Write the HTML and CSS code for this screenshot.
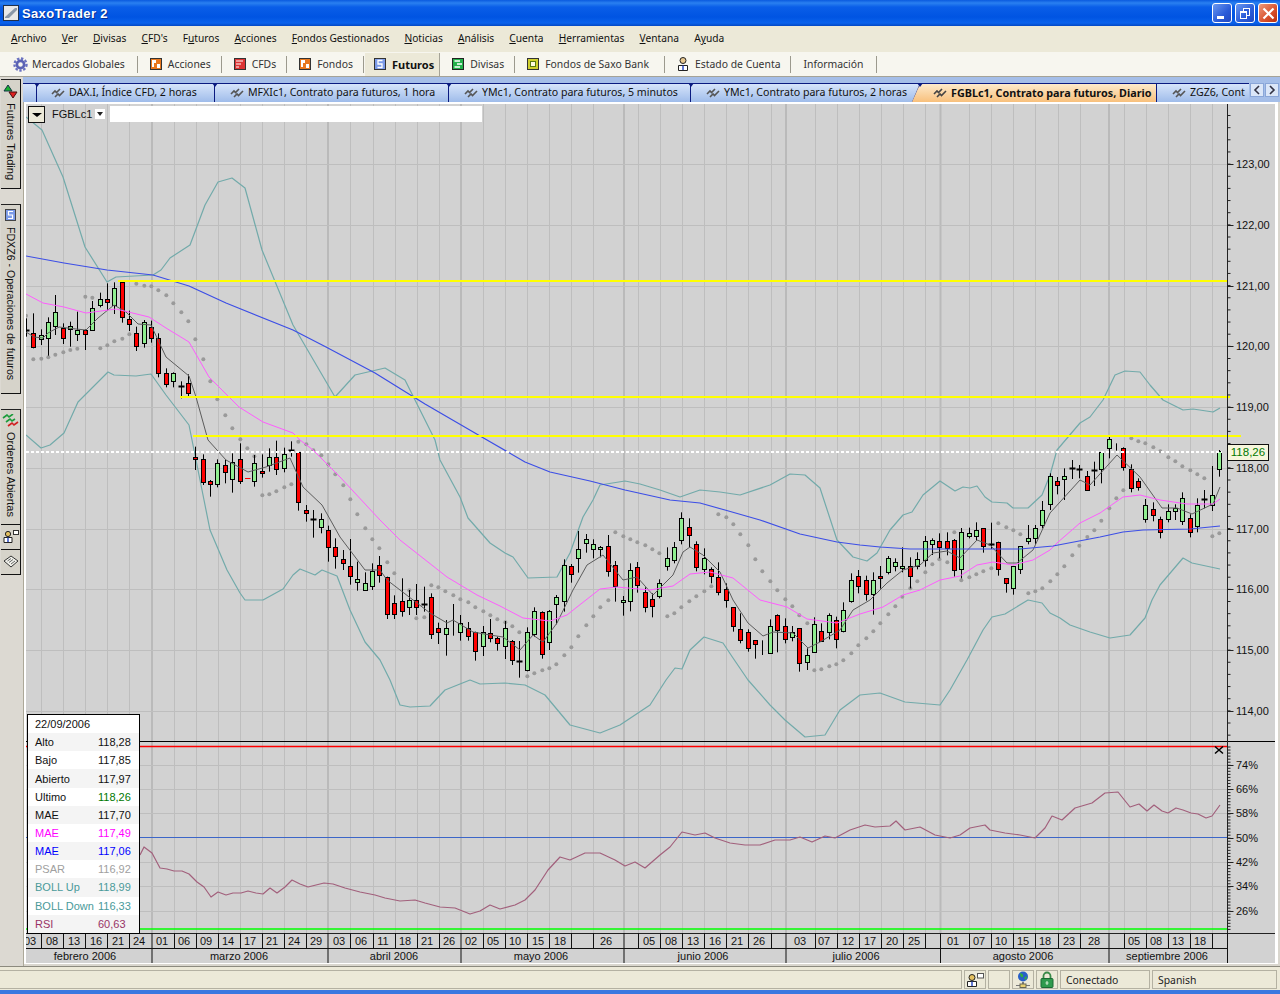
FILE: index.html
```html
<!DOCTYPE html>
<html>
<head>
    <title>SaxoTrader 2</title>
    <link rel="stylesheet" href="styles.css">
</head>
<body>
<div class="app">
    <div class="titlebar">
        <svg class="title-icon" width="16" height="16" viewBox="0 0 16 16">
            <rect x="0.5" y="0.5" width="15" height="15" fill="#e8e8e8" stroke="#20304a"/>
            <path d="M2 12 L12 3 L14 3 L14 5 L6 13 L2 13 Z" fill="#8a97a8"/>
        </svg>
        <span class="title-text">SaxoTrader 2</span>
        <div class="win-buttons">
            <div class="win-btn"><span class="glyph-min"></span></div>
            <div class="win-btn"><span class="glyph-max"></span></div>
            <div class="win-btn win-close">
                <svg width="13" height="13" viewBox="0 0 13 13"><path d="M1.5 1.5 L11.5 11.5 M11.5 1.5 L1.5 11.5" stroke="#fff" stroke-width="2.2"/></svg>
            </div>
        </div>
    </div>

    <div class="menubar">
        <span><u>A</u>rchivo</span>
        <span><u>V</u>er</span>
        <span><u>D</u>ivisas</span>
        <span><u>C</u>FD's</span>
        <span>F<u>u</u>turos</span>
        <span><u>A</u>cciones</span>
        <span><u>F</u>ondos Gestionados</span>
        <span><u>N</u>oticias</span>
        <span><u>A</u>nálisis</span>
        <span><u>C</u>uenta</span>
        <span><u>H</u>erramientas</span>
        <span><u>V</u>entana</span>
        <span>A<u>y</u>uda</span>
    </div>

    <div class="toolbar">
        <div class="tool tool-first">
            <svg width="15" height="15" viewBox="0 0 15 15">
                <circle cx="7.5" cy="7.5" r="6" fill="none" stroke="#6a72c0" stroke-width="2.4" stroke-dasharray="2.4 1.6"/>
                <circle cx="7.5" cy="7.5" r="3.6" fill="none" stroke="#5a62b4" stroke-width="2.6"/>
            </svg>
            Mercados Globales
        </div>
        <div class="tool">
            <svg width="12" height="12" viewBox="0 0 12 12">
                <rect x="0.5" y="0.5" width="11" height="11" fill="#e8781e" stroke="#333"/>
                <path d="M2 2 H6 V5 H4 V9 H2 Z M7 6 H10 V10 H7 Z" fill="#fff"/>
            </svg>
            Acciones
        </div>
        <div class="tool">
            <svg width="12" height="12" viewBox="0 0 12 12">
                <rect x="0.5" y="0.5" width="11" height="11" fill="#dc3434" stroke="#333"/>
                <path d="M2 3 H9 M2 6 H7 M2 9 H5" stroke="#fff" stroke-width="1.2"/>
            </svg>
            CFDs
        </div>
        <div class="tool">
            <svg width="12" height="12" viewBox="0 0 12 12">
                <rect x="0.5" y="0.5" width="11" height="11" fill="#e8781e" stroke="#333"/>
                <path d="M2 2 H6 V5 H4 V9 H2 Z M7 6 H10 V10 H7 Z" fill="#fff"/>
            </svg>
            Fondos
        </div>
        <div class="tool tool-active">
            <svg width="12" height="12" viewBox="0 0 12 12">
                <rect x="0.5" y="0.5" width="11" height="11" fill="#7c9be8" stroke="#333"/>
                <path d="M8.5 2.5 H4 V6 H8 V9.5 H3.5" fill="none" stroke="#fff" stroke-width="1.3"/>
            </svg>
            Futuros
        </div>
        <div class="tool">
            <svg width="12" height="12" viewBox="0 0 12 12">
                <rect x="0.5" y="0.5" width="11" height="11" fill="#22b04a" stroke="#222"/>
                <path d="M2.5 3 H8 M5 6 H10 M2.5 9 H8" stroke="#fff" stroke-width="1.3"/>
            </svg>
            Divisas
        </div>
        <div class="tool tool-wide">
            <svg width="12" height="12" viewBox="0 0 12 12">
                <rect x="0.5" y="0.5" width="11" height="11" fill="#d0d030" stroke="#333"/>
                <rect x="3.5" y="3.5" width="5" height="5" fill="#fffbe0" stroke="#5a7a10"/>
            </svg>
            Fondos de Saxo Bank
        </div>
        <div class="tool">
            <svg width="12" height="14" viewBox="0 0 12 14">
                <circle cx="6" cy="3.5" r="3" fill="#e8c890" stroke="#222"/>
                <path d="M1.5 13.5 V8.5 H10.5 V13.5 Z" fill="#fff" stroke="#222"/>
                <path d="M6 8.5 V13" stroke="#2040c0" stroke-width="1.4"/>
            </svg>
            Estado de Cuenta
        </div>
        <div class="tool tool-plain">Información</div>
    </div>

    <div class="main">
        <div class="rail">
            <div class="rail-tab rail-futures">
                <svg width="16" height="15" viewBox="0 0 16 15">
                    <path d="M1 7 L5 1 L9 7 Z" fill="#18b030" stroke="#134"/>
                    <path d="M6 8 L14 8 L10 14 Z" fill="#e02020" stroke="#411"/>
                </svg>
                <span class="rail-text">Futures Trading</span>
            </div>
            <div class="rail-tab rail-fdx">
                <svg width="11" height="12" viewBox="0 0 11 12">
                    <rect x="0.5" y="0.5" width="10" height="11" fill="#7c9be8" stroke="#444"/>
                    <path d="M8 2.5 H3.5 V6 H7.5 V9.5 H3" fill="none" stroke="#fff" stroke-width="1.2"/>
                </svg>
                <span class="rail-text">FDXZ6 - Operaciones de futuros</span>
            </div>
            <div class="rail-tab rail-orders">
                <svg width="17" height="14" viewBox="0 0 17 14">
                    <path d="M1 4 L5 1 L7 3 L11 0 M4 8 L8 5 L10 7 L13 5" fill="none" stroke="#1a9c3a" stroke-width="1.6"/>
                    <path d="M6 12 L10 9 L12 11 L16 8" fill="none" stroke="#d02020" stroke-width="1.6"/>
                </svg>
                <span class="rail-text">Ordenes Abiertas</span>
            </div>
            <div class="rail-tab rail-icon">
                <svg width="16" height="13" viewBox="0 0 16 13">
                    <circle cx="5" cy="4" r="2.6" fill="#e4c060" stroke="#222"/>
                    <path d="M1 12.5 V7.5 H9 V12.5 Z" fill="#fff" stroke="#222"/>
                    <path d="M5 7.5 V12" stroke="#2040c0" stroke-width="1.4"/>
                    <rect x="10.5" y="0.5" width="5" height="4" fill="#fff" stroke="#333"/>
                </svg>
            </div>
            <div class="rail-tab rail-icon">
                <svg width="16" height="13" viewBox="0 0 16 13">
                    <path d="M1 6 L8 1 L15 6 L8 12 Z" fill="#f0f0ea" stroke="#333"/>
                    <path d="M4.5 6 L8 3.5 M6 7.5 L10 4.5 M8 9 L12 6" stroke="#666"/>
                </svg>
            </div>
        </div>

        <div class="workspace">
            <div class="tabs">
                <div class="tab tab-stub"></div>
                <div class="tab tab-a">
                    <svg class="tab-icon" width="14" height="12" viewBox="0 0 14 12"><path d="M1 8 L4 5 L5.5 6.5 L9 3 M4 11 L7 8 L8.5 9.5 L13 5" fill="none" stroke="#555" stroke-width="1.6"/></svg>
                    DAX.I, Índice CFD, 2 horas
                </div>
                <div class="tab tab-b">
                    <svg class="tab-icon" width="14" height="12" viewBox="0 0 14 12"><path d="M1 8 L4 5 L5.5 6.5 L9 3 M4 11 L7 8 L8.5 9.5 L13 5" fill="none" stroke="#555" stroke-width="1.6"/></svg>
                    MFXIc1, Contrato para futuros, 1 hora
                </div>
                <div class="tab tab-c">
                    <svg class="tab-icon" width="14" height="12" viewBox="0 0 14 12"><path d="M1 8 L4 5 L5.5 6.5 L9 3 M4 11 L7 8 L8.5 9.5 L13 5" fill="none" stroke="#555" stroke-width="1.6"/></svg>
                    YMc1, Contrato para futuros, 5 minutos
                </div>
                <div class="tab tab-d">
                    <svg class="tab-icon" width="14" height="12" viewBox="0 0 14 12"><path d="M1 8 L4 5 L5.5 6.5 L9 3 M4 11 L7 8 L8.5 9.5 L13 5" fill="none" stroke="#555" stroke-width="1.6"/></svg>
                    YMc1, Contrato para futuros, 2 horas
                </div>
                <div class="tab tab-active">
                    <svg class="tab-icon" width="14" height="12" viewBox="0 0 14 12"><path d="M1 8 L4 5 L5.5 6.5 L9 3 M4 11 L7 8 L8.5 9.5 L13 5" fill="none" stroke="#444" stroke-width="1.6"/></svg>
                    FGBLc1, Contrato para futuros, Diario
                </div>
                <div class="tab tab-last">
                    <svg class="tab-icon" width="14" height="12" viewBox="0 0 14 12"><path d="M1 8 L4 5 L5.5 6.5 L9 3 M4 11 L7 8 L8.5 9.5 L13 5" fill="none" stroke="#555" stroke-width="1.6"/></svg>
                    ZGZ6, Cont
                </div>
                <div class="tab-scroll">
                    <div class="scroll-btn"><svg width="8" height="12" viewBox="0 0 8 12"><path d="M6 2 L2 6 L6 10" fill="none" stroke="#334" stroke-width="1.6"/></svg></div>
                    <div class="scroll-btn"><svg width="8" height="12" viewBox="0 0 8 12"><path d="M2 2 L6 6 L2 10" fill="none" stroke="#334" stroke-width="1.6"/></svg></div>
                </div>
            </div>

            <div class="chart-frame">
                <div class="chart" id="chart">
                    <div class="symbol-bar">
                        <div class="symbol-menu"><span class="arrow-down"></span></div>
                        <span class="symbol-name">FGBLc1</span>
                        <div class="symbol-drop"><span class="arrow-small"></span></div>
                        <div class="symbol-input"></div>
                    </div>

                    <div class="legend">
                        <div class="legend-row"><span>22/09/2006</span></div>
                        <div class="legend-row"><span>Alto</span><span class="val">118,28</span></div>
                        <div class="legend-row"><span>Bajo</span><span class="val">117,85</span></div>
                        <div class="legend-row"><span>Abierto</span><span class="val">117,97</span></div>
                        <div class="legend-row"><span>Ultimo</span><span class="val c-green">118,26</span></div>
                        <div class="legend-row"><span>MAE</span><span class="val">117,70</span></div>
                        <div class="legend-row c-magenta"><span>MAE</span><span class="val">117,49</span></div>
                        <div class="legend-row c-blue"><span>MAE</span><span class="val">117,06</span></div>
                        <div class="legend-row c-gray"><span>PSAR</span><span class="val">116,92</span></div>
                        <div class="legend-row c-teal"><span>BOLL Up</span><span class="val">118,99</span></div>
                        <div class="legend-row c-teal"><span>BOLL Down</span><span class="val">116,33</span></div>
                        <div class="legend-row c-rsi"><span>RSI</span><span class="val">60,63</span></div>
                    </div>

                    <div class="last-price">118,26</div>
                </div>
            </div>
        </div>
    </div>

    <div class="statusbar">
        <div class="cell cell-grow"></div>
        <div class="cell cell-icon">
            <svg width="18" height="14" viewBox="0 0 18 14">
                <circle cx="6" cy="4.5" r="3" fill="#e4c060" stroke="#222"/>
                <path d="M1.5 13.5 V8.5 H10.5 V13.5 Z" fill="#fff" stroke="#222"/>
                <path d="M6 8.5 V13" stroke="#2040c0" stroke-width="1.4"/>
                <rect x="11.5" y="0.5" width="6" height="4.5" fill="#fff" stroke="#555"/>
            </svg>
        </div>
        <div class="cell cell-icon"></div>
        <div class="cell cell-icon">
            <svg width="16" height="17" viewBox="0 0 16 17">
                <circle cx="8" cy="5.5" r="5" fill="#2860c8"/>
                <path d="M5 2 Q9 3 8 6 Q5 7 5 2 Z M9 7 L12 5 L11 9 Z" fill="#30b040"/>
                <path d="M8 11 V14" stroke="#555" stroke-width="1.5"/>
                <path d="M1 14.5 H15" stroke="#777"/>
                <rect x="5" y="13" width="6" height="3.5" fill="#e8d070" stroke="#665"/>
            </svg>
        </div>
        <div class="cell cell-icon">
            <svg width="14" height="17" viewBox="0 0 14 17">
                <path d="M3.5 8 V5 A3.5 3.5 0 0 1 10.5 5 V8" fill="none" stroke="#3a8a4a" stroke-width="1.8"/>
                <rect x="1" y="7.5" width="12" height="9" rx="1" fill="#2f9a4e" stroke="#1a6a34"/>
                <path d="M7 10 V14 M5.5 12 H8.5" stroke="#d8f0d8"/>
            </svg>
        </div>
        <div class="cell cell-conn">Conectado</div>
        <div class="cell cell-lang">Spanish</div>
    </div>
    <div class="bottom-edge"></div>
</div>
<script src="chart.js"></script>
</body>
</html>
```

FILE: styles.css
```css
* {
    box-sizing: border-box;
}
body {
    margin: 0;
    background-color: #ece9d8;
    font-family: "Noto Sans", "Liberation Sans", sans-serif;
    font-size: 10.4px;
    color: #111;
}
.app {
    width: 1280px;
    height: 994px;
    display: flex;
    flex-direction: column;
    overflow: hidden;
}

/* window chrome */
.titlebar {
    height: 26px;
    flex: none;
    display: flex;
    align-items: center;
    padding-left: 3px;
    background: linear-gradient(#0a5adf 0, #2a80f0 3px, #0a5ee8 7px, #0054e2 17px, #0a62ec 23px, #0348c4 26px);
}
.title-icon {
    flex: none;
}
.title-text {
    margin-left: 3px;
    color: #fff;
    font-family: "Liberation Sans", sans-serif;
    font-weight: bold;
    font-size: 13px;
    letter-spacing: 0.35px;
    text-shadow: 1px 1px 0 #0a2f90;
}
.win-buttons {
    margin-left: auto;
    padding-right: 2px;
    display: flex;
    gap: 3px;
}
.win-btn {
    width: 20px;
    height: 20px;
    border: 1px solid #fff;
    border-radius: 3px;
    background: linear-gradient(135deg, #6a98f0, #2a5bd8 60%, #2248c0);
    display: flex;
    align-items: center;
    justify-content: center;
    position: relative;
}
.win-close {
    background: linear-gradient(135deg, #ee9a7c, #d8502c 60%, #b83010);
}
.glyph-min {
    width: 7px;
    height: 3px;
    background: #fff;
    margin-top: 8px;
    margin-right: 4px;
}
.glyph-max {
    width: 7px;
    height: 8px;
    border: 1px solid #fff;
    border-top-width: 2px;
    margin-top: 3px;
    margin-right: 3px;
    box-shadow: 3px -3px 0 -1px #2a5bd8, 3px -3px 0 0 #fff;
}
.menubar {
    height: 26px;
    flex: none;
    display: flex;
    align-items: center;
    gap: 15.2px;
    padding: 0 0 3px 11px;
    font-size: 10.2px;
    background-color: #ece9d8;
}
.toolbar {
    height: 25px;
    flex: none;
    display: flex;
    align-items: center;
    background-color: #f7f6ef;
    border-bottom: 1px solid #a5a397;
}
.tool {
    height: 23px;
    display: flex;
    align-items: center;
    gap: 6px;
    padding: 0 11px 0 12px;
    color: #333;
    position: relative;
}
.tool::after {
    content: "";
    position: absolute;
    right: 0;
    top: 3px;
    bottom: 3px;
    width: 1px;
    background-color: #9c9a8e;
}
.tool-first {
    padding-left: 13px;
    gap: 4px;
    padding-right: 13px;
}
.tool-wide {
    padding-right: 16px;
}
.tool-plain {
    padding-right: 13px;
}
.tool-active {
    background-color: #ece9d8;
    font-weight: bold;
    font-size: 11px;
    color: #111;
    border-left: 1px solid #f7f6ef;
    border-right: 1px solid #a5a397;
    padding-right: 5px;
    padding-left: 9px;
}
.tool-active::after {
    display: none;
}

/* left rail */
.main {
    height: 890px;
    flex: none;
    display: flex;
    background-color: #d9d6ce;
    border-bottom: 1px solid #8c8a7e;
}
.rail {
    width: 24px;
    flex: none;
    padding: 2px 0 0 1px;
    display: flex;
    flex-direction: column;
    border-right: 1px solid #aca899;
    background-color: #dcd9d2;
}
.rail-tab {
    width: 20px;
    background-color: #d6d3ca;
    border-top: 1px solid #222;
    border-right: 1px solid #111;
    border-bottom: 1px solid #111;
    display: flex;
    flex-direction: column;
    align-items: center;
    padding-top: 4px;
    gap: 4px;
}
.rail-futures { height: 110px; }
.rail-fdx { height: 190px; margin-top: 15px; gap: 6px; }
.rail-orders { height: 116px; margin-top: 15px; }
.rail-icon { height: 25px; padding-top: 5px; border-top: none; }
.rail-text {
    writing-mode: vertical-rl;
    font-family: "Liberation Sans", sans-serif;
    font-size: 11px;
    color: #111;
    white-space: nowrap;
}
.rail-fdx .rail-text {
    font-size: 10.6px;
}

/* chart tabs */
.workspace {
    flex: none;
    width: 1256px;
    display: flex;
    flex-direction: column;
}
.tabs {
    height: 25px;
    flex: none;
    display: flex;
    margin-left: -1px;
    padding: 6px 0 0 0;
    position: relative;
    overflow: hidden;
    background-color: #a5bee8;
    font-size: 10.6px;
}
.tab {
    flex: none;
    height: 19px;
    display: flex;
    align-items: center;
    gap: 4px;
    padding: 0 0 2px 14px;
    color: #111;
    white-space: nowrap;
    position: relative;
    border-top: 1px solid #0a1a80;
    border-right: 1px solid #0a1a80;
    background: linear-gradient(#d6e4fa, #9fbcea);
}
.tab::after {
    content: "";
    position: absolute;
    top: -1px;
    right: -4px;
    border-left: 3.5px solid transparent;
    border-right: 3.5px solid transparent;
    border-top: 4px solid #0a1a80;
    z-index: 2;
}
.tab-stub { width: 14px; padding: 0; }
.tab-a { width: 178px; }
.tab-b { width: 234px; padding-left: 15px; }
.tab-c { width: 242px; padding-left: 15px; }
.tab-d { width: 229px; padding-left: 15px; }
.tab-active {
    width: 245px;
    margin-left: -8px;
    padding-left: 21px;
    font-weight: bold;
    font-size: 10.8px;
    background: linear-gradient(#fdeacb, #f8c07c);
    clip-path: polygon(8px 0, 100% 0, 100% 100%, 0 100%);
    z-index: 1;
}
.tab-active::after {
    display: none;
}
.tab-active::before {
    content: "";
    position: absolute;
    left: 3px;
    top: 0;
    bottom: 0;
    width: 1px;
    background-color: #0a1a80;
    transform: skewX(-24deg);
}
.tab-last {
    width: 100px;
    padding-left: 15px;
    border-right: none;
}
.tab-scroll {
    position: absolute;
    right: 1px;
    top: 6px;
    width: 30px;
    height: 19px;
    display: flex;
    gap: 1px;
    padding: 0 0 5px 1px;
    background-color: #a5bee8;
    z-index: 3;
}
.scroll-btn {
    flex: 1;
    display: flex;
    align-items: center;
    justify-content: center;
    background-color: #dbe6f8;
    border: 1px solid #8aa6d8;
}

/* chart area */
.chart-frame {
    flex: none;
    width: 1256px;
    height: 864px;
    padding: 2px 3px 2px 2px;
    background-color: #fff;
    border-bottom: 2px solid #d9d6ce;
    border-right: 2px solid #d9d6ce;
}
.chart {
    width: 1249px;
    height: 859px;
    position: relative;
    background-color: #d2d2d2;
    font-family: "Liberation Sans", sans-serif;
}
.chart svg {
    display: block;
}
.chart svg text {
    font-family: "Liberation Sans", sans-serif;
    font-size: 11px;
    fill: #111;
}
.symbol-bar {
    position: absolute;
    left: 2px;
    top: 2px;
    height: 16px;
    display: flex;
    align-items: center;
}
.symbol-menu {
    width: 17px;
    height: 17px;
    background-color: #ece9d8;
    border: 1px solid #111;
    display: flex;
    align-items: center;
    justify-content: center;
}
.arrow-down {
    border-left: 5px solid transparent;
    border-right: 5px solid transparent;
    border-top: 4px solid #000;
    margin-top: 2px;
}
.symbol-name {
    margin-left: 7px;
    width: 43px;
    font-size: 11px;
    color: #111;
}
.symbol-drop {
    width: 10px;
    height: 10px;
    background-color: #fff;
    display: flex;
    align-items: center;
    justify-content: center;
}
.arrow-small {
    border-left: 3px solid transparent;
    border-right: 3px solid transparent;
    border-top: 4px solid #222;
}
.symbol-input {
    margin-left: 5px;
    width: 372px;
    height: 16px;
    background-color: #fff;
}
.legend {
    position: absolute;
    left: 1px;
    top: 610px;
    width: 113px;
    height: 220px;
    background-color: #fff;
    border: 1px solid #000;
    font-size: 11px;
}
.legend-row {
    height: 18.16px;
    display: flex;
    align-items: center;
    padding-left: 7px;
    color: #111;
}
.legend-row:nth-child(even) {
    background-color: #f4f4f4;
}
.legend-row .val {
    position: absolute;
    left: 70px;
}
.c-green { color: #007800; }
.c-magenta { color: #ff00ff; }
.c-blue { color: #0000ff; }
.c-gray { color: #a0a0a0; }
.c-teal { color: #4a9a9a; }
.c-rsi { color: #993366; }
.last-price {
    position: absolute;
    left: 1201px;
    top: 340px;
    width: 42px;
    height: 17px;
    background-color: #f6f6dc;
    border: 1px solid #111;
    color: #007800;
    font-size: 11.5px;
    line-height: 15px;
    text-align: center;
}

/* status bar */
.statusbar {
    flex: none;
    height: 23px;
    display: flex;
    gap: 2px;
    padding: 3px 3px 1px 0;
    background-color: #ece9d8;
}
.cell {
    height: 19px;
    border: 1px solid #b4b1a2;
    display: flex;
    align-items: center;
    justify-content: center;
    color: #222;
    background-color: #ece9d8;
}
.cell-grow {
    flex: 1;
    border-left: none;
}
.cell-icon {
    width: 22px;
}
.cell-conn {
    width: 90px;
    justify-content: flex-start;
    padding-left: 5px;
}
.cell-lang {
    width: 125px;
    justify-content: flex-start;
    padding-left: 5px;
}
.bottom-edge {
    flex: 1;
    background-color: #3a78e0;
}
```

FILE: chart.js
```js
// Page coordinates are used directly: the svg viewBox starts at the chart's top left corner.
const LEFT = 26, TOP = 104, WIDTH = 1249, HEIGHT = 859, AXIS_X = 1227.5;

// candles read per section: [x, high, low, bodyTop, bodyBottom, kind], kept in 3x units of the section base
const candleSections = [
    { bx: 26, by: 270, rows: [
        [0,145,200,180,180,'d'],[22,130,235,190,230,'r'],[46,178,225,196,206,'g'],[67,142,257,157,205,'g'],
        [88,75,195,127,169,'g'],[112,160,222,173,203,'r'],[133,155,230,169,176,'g'],[154,125,213,181,191,'g'],
        [178,178,240,181,193,'r'],[199,93,182,115,179,'g'],[223,68,112,88,106,'g'],[244,40,122,88,95,'r'],
        [265,37,132,55,106,'g'],[289,33,158,37,142,'r'],[310,122,183,148,163,'r'],[331,170,243,190,227,'r'],
        [355,150,233,157,220,'g'],[376,152,218,172,205,'r'],[397,190,322,205,310,'r'],[421,295,352,308,343,'r'],
        [442,307,352,310,334,'g'],[466,334,385,347,347,'d'],[487,313,380,340,370,'r'],[508,530,600,560,568,'r'],
        [532,553,645,568,637,'r'],[553,630,680,632,643,'r'],[574,568,652,580,643,'g'],[598,570,640,584,607,'r'],
        [619,550,668,577,628,'g'],[643,520,642,568,634,'r'],[664,625,625,625,625,'m'],[685,555,650,580,634,'g'],
        [709,553,623,604,610,'r'],[730,535,605,560,586,'g'],[751,512,615,560,598,'r'],[775,533,607,551,595,'g'],
        [796,514,560,540,540,'d']
    ]},
    { bx: 290, by: 440, rows: [
        [25,35,212,35,187,'r'],[49,195,245,211,220,'r'],[70,210,293,237,237,'d'],[94,220,280,236,262,'g'],
        [115,257,365,271,322,'r'],[136,295,386,322,349,'r'],[160,330,390,358,370,'r'],[181,297,434,379,409,'r'],
        [202,365,452,418,427,'g'],[226,397,452,430,451,'g'],[247,370,450,394,439,'g'],[268,348,428,374,405,'r'],
        [292,410,537,412,523,'r'],[313,466,537,490,523,'r'],[337,415,530,484,514,'r'],[358,450,525,481,502,'g'],
        [379,432,525,481,502,'r'],[403,440,515,491,491,'d'],[424,460,597,472,583,'r'],[445,548,612,565,577,'r'],
        [469,540,647,565,583,'g'],[490,492,587,0,0,'n'],[511,525,602,549,575,'g'],[535,546,602,565,587,'r'],
        [556,575,662,577,634,'r'],[580,558,648,577,619,'g'],[601,537,607,580,595,'r'],[622,590,632,595,610,'r'],
        [646,543,657,565,619,'g'],[667,600,675,602,661,'r'],[688,603,713,662,662,'d'],[712,562,694,577,691,'g'],
        [733,502,590,514,583,'g'],[757,514,656,517,643,'r'],[778,510,630,514,607,'g'],[799,465,553,472,493,'g'],
        [823,358,515,376,484,'g'],[844,372,428,379,401,'r'],[865,273,398,328,355,'g'],[889,282,338,298,310,'g']
    ]},
    { bx: 560, by: 500, rows: [
        [100,118,175,133,148,'g'],[121,138,172,142,148,'g'],[145,105,230,139,214,'r'],[166,183,305,196,259,'r'],
        [190,288,347,301,307,'g'],[211,190,334,211,304,'g'],[232,186,278,202,256,'r'],[256,262,337,277,322,'r'],
        [277,280,352,298,319,'r'],[298,238,295,250,289,'g'],[322,142,212,175,199,'g'],[343,126,190,142,181,'g'],
        [364,37,133,55,121,'g'],[388,55,142,82,106,'r'],[409,124,214,133,202,'r'],[433,145,223,175,208,'g'],
        [454,202,250,208,229,'r'],[475,187,286,232,277,'r'],[499,250,323,268,301,'r'],[520,322,395,322,379,'r'],
        [541,340,430,388,421,'r'],[565,388,455,397,445,'r'],[586,421,476,421,431,'r'],[607,421,465,0,0,'n'],
        [631,358,460,379,458,'g'],[652,343,457,346,391,'r'],[676,355,430,379,418,'r'],[697,378,424,397,412,'g'],
        [718,385,515,385,490,'r'],[742,445,510,466,487,'g'],[763,352,457,373,455,'g'],[784,370,425,394,422,'r'],
        [808,340,418,346,397,'g'],[829,350,445,361,418,'r'],[850,307,397,331,394,'g'],[874,220,308,241,304,'g'],
        [895,210,280,229,259,'r']
    ]},
    { bx: 820, by: 430, rows: [
        [139,437,512,451,493,'r'],[160,427,554,451,493,'g'],[181,408,476,439,445,'r'],[205,378,433,385,427,'g'],
        [226,385,424,397,409,'g'],[247,352,427,409,415,'g'],[271,382,475,409,439,'r'],[292,367,418,388,409,'g'],
        [316,318,410,334,391,'g'],[337,325,375,331,343,'g'],[358,310,385,334,352,'r'],[382,307,376,334,355,'r'],
        [403,327,440,331,421,'r'],[424,294,445,307,418,'g'],[448,293,325,310,319,'g'],[469,277,330,301,319,'g'],
        [490,295,368,295,349,'r'],[514,278,357,342,342,'d'],[535,335,437,337,418,'r'],[559,445,488,445,460,'r'],
        [580,408,494,409,475,'g'],[601,350,432,349,418,'g'],[625,285,343,325,334,'g'],[646,285,343,295,325,'g'],
        [667,213,295,241,286,'g'],[691,130,240,139,223,'g'],[712,141,193,154,166,'r']
    ]},
    { bx: 1000, by: 400, rows: [
        [193,205,300,229,238,'g'],[217,180,237,203,203,'d'],[238,195,235,206,206,'d'],[262,213,272,229,269,'r'],
        [283,185,258,211,211,'d'],[304,155,250,157,208,'g'],[328,110,175,118,145,'g'],[349,130,152,0,0,'n'],
        [370,142,212,145,202,'r'],[394,193,277,208,265,'r'],[415,235,272,244,262,'r'],[436,297,368,316,358,'g'],
        [460,307,364,328,346,'r'],[481,350,415,358,397,'r'],[505,313,367,334,358,'g'],[526,313,360,325,334,'g'],
        [547,277,375,295,364,'g'],[571,343,412,355,397,'r'],[592,295,397,316,379,'g'],[613,270,325,296,296,'d'],
        [637,198,333,286,316,'g'],[658,150,230,152,208,'g']
    ]}
];

const psarSections = [
    { bx: 26, by: 270, dots: [[0,137],[22,268],[46,266],[67,262],[88,254],[112,247],[133,240],[154,236],[178,80],[199,83],
        [223,235],[244,226],[265,214],[289,206],[310,193],[331,41],[355,47],[376,49],[397,61],[421,76],[442,100],[466,127],
        [487,154],[508,208],[532,268],[553,334],[574,388],[598,436],[619,475],[643,508],[664,535],[685,559],[709,676],
        [730,673],[751,664],[775,652],[796,643]] },
    { bx: 290, by: 440, dots: [[25,5],[49,13],[70,31],[94,46],[115,73],[136,103],[160,136],[181,178],[202,223],[226,265],
        [247,298],[268,325],[292,367],[313,400],[358,451],[379,535],[403,532],[424,436],[445,442],[466,454],[490,466],
        [511,478],[535,487],[556,502],[580,514],[601,526],[622,538],[646,547],[667,559],[688,577],[712,709],[733,700],
        [757,691],[778,685],[799,673],[823,646],[844,622],[865,589],[889,556]] },
    { bx: 560, by: 500, dots: [[100,349],[121,322],[145,301],[166,97],[190,109],[211,118],[232,127],[256,136],[277,148],
        [298,160],[322,349],[343,340],[364,322],[388,304],[409,289],[433,274],[454,259],[475,43],[499,52],[520,73],[541,103],
        [565,136],[586,178],[607,214],[631,244],[652,271],[676,298],[697,319],[718,346],[742,370],[763,511],[784,508],
        [808,499],[829,493],[850,481],[874,460],[895,436]] },
    { bx: 820, by: 430, dots: [[139,625],[160,604],[181,580],[205,553],[226,529],[247,500],[271,475],[292,454],[316,427],
        [337,403],[358,388],[382,397],[403,307],[424,451],[448,442],[469,433],[490,424],[514,415],[535,280],[559,292],
        [580,301],[601,313],[625,490],[646,484],[667,475],[691,454],[712,433]] },
    { bx: 1000, by: 400, dots: [[193,499],[217,466],[238,437],[262,411],[283,391],[304,362],[328,325],[349,295],[370,271],
        [394,115],[415,124],[436,130],[460,142],[481,154],[505,172],[526,184],[547,199],[571,211],[592,223],[613,235],
        [637,409],[658,400]] }
];

const blueLine = [[26,256],[64,263],[107,270],[153,275],[189,286],[226,303],[293,330],[326,347],[375,373],[425,404],
    [487,440],[525,462],[550,472],[590,481],[625,490],[670,500],[700,503],[725,510],[760,520],[800,534],[837,542],
    [860,545],[880,547],[910,549],[1020,549],[1053,546],[1100,537],[1123,532],[1143,530],[1190,529],[1220,526]];

const magentaLine = [[26,294],[43,303],[64,307],[86,313],[116,309],[149,317],[166,328],[189,342],[209,377],[239,407],
    [263,422],[293,433],[300,440],[313,450],[340,477],[380,520],[400,540],[447,577],[477,595],[500,606],[523,618],
    [550,621],[567,615],[577,607],[600,589],[617,587],[650,590],[673,586],[690,574],[710,572],[733,578],[760,600],
    [787,607],[807,619],[837,623],[860,614],[883,607],[903,595],[920,590],[940,580],[960,576],[977,565],[993,562],
    [1013,565],[1033,560],[1050,550],[1057,543],[1080,523],[1100,513],[1123,497],[1140,495],[1160,500],[1187,504],
    [1213,504],[1220,499]];

const grayLine = [[26,332],[34,337],[43,338],[48,333],[59,327],[76,329],[86,330],[98,318],[114,305],[126,312],[138,324],
    [151,325],[166,357],[189,376],[196,397],[208,440],[226,460],[248,472],[266,467],[290,458],[303,487],[322,505],[340,537],
    [365,570],[380,570],[387,580],[430,613],[447,623],[453,620],[473,632],[490,635],[503,637],[520,650],[533,635],
    [543,642],[557,623],[573,590],[587,565],[603,555],[623,580],[637,577],[653,595],[673,575],[683,552],[690,547],
    [703,555],[720,572],[733,600],[748,623],[763,636],[773,632],[793,633],[808,648],[820,642],[840,630],[853,610],
    [870,600],[887,583],[903,570],[920,565],[933,553],[947,551],[960,558],[977,540],[990,545],[1007,563],[1017,563],
    [1033,550],[1050,513],[1080,480],[1090,485],[1117,455],[1140,477],[1162,508],[1177,508],[1192,514],[1213,504],[1220,487]];

const bandUpper = [[26,117],[42,130],[63,177],[85,247],[107,282],[116,277],[153,275],[161,270],[170,258],[190,245],[205,205],
    [218,182],[232,178],[245,188],[262,250],[293,325],[335,397],[355,375],[385,368],[405,380],[435,440],[440,460],[460,497],
    [468,518],[490,543],[505,553],[513,557],[528,578],[557,577],[570,553],[583,517],[593,500],[600,485],[625,481],[640,484],
    [660,490],[680,497],[700,490],[720,492],[740,495],[770,485],[790,474],[805,475],[820,488],[837,540],[853,557],[867,561],
    [877,553],[890,530],[903,515],[912,512],[923,495],[940,481],[955,491],[963,487],[970,488],[977,486],[985,497],[992,502],
    [1007,503],[1013,508],[1028,508],[1042,495],[1050,475],[1057,450],[1080,423],[1090,417],[1103,400],[1115,375],[1125,371],
    [1140,372],[1150,385],[1163,400],[1183,410],[1193,409],[1213,412],[1220,408]];

const bandLower = [[26,435],[41,448],[50,445],[64,433],[78,402],[93,387],[108,372],[114,375],[136,376],[151,374],[166,395],
    [189,425],[196,460],[204,500],[210,530],[227,570],[240,593],[245,600],[263,600],[283,589],[293,575],[300,569],[315,575],
    [322,570],[337,576],[350,610],[365,642],[380,660],[390,680],[400,705],[410,707],[430,706],[445,690],[470,680],[480,684],
    [505,683],[525,685],[545,695],[570,725],[600,733],[620,725],[650,705],[666,680],[675,668],[682,669],[690,650],[704,637],
    [723,643],[733,658],[748,680],[770,705],[785,720],[805,737],[825,735],[840,710],[860,695],[880,693],[905,702],[940,705],
    [950,690],[967,660],[983,630],[992,617],[1005,614],[1028,600],[1042,603],[1050,613],[1060,618],[1070,625],[1090,632],
    [1110,638],[1130,635],[1145,618],[1152,600],[1160,585],[1183,558],[1192,563],[1220,569]];

const rsiLine = [[140,855],[144,847],[152,853],[160,868],[167,869],[174,871],[182,871],[189,874],[197,882],[204,887],[211,897],
    [218,892],[226,895],[233,893],[241,893],[248,891],[256,893],[263,894],[270,888],[277,893],[285,887],[292,880],[300,884],
    [308,887],[316,885],[324,883],[333,884],[345,888],[360,892],[375,895],[385,898],[400,901],[415,900],[425,903],[440,907],
    [455,908],[470,914],[480,911],[490,905],[500,909],[515,905],[525,900],[535,890],[548,870],[560,857],[570,860],[585,853],
    [600,853],[615,860],[625,866],[635,862],[645,868],[660,855],[670,847],[682,832],[695,835],[705,833],[715,838],[730,843],
    [745,845],[760,845],[775,840],[790,840],[800,837],[812,842],[825,836],[835,838],[850,830],[865,825],[875,827],[890,826],
    [896,821],[905,830],[920,827],[935,835],[950,838],[960,835],[970,828],[985,825],[990,830],[1005,833],[1020,835],[1035,838],
    [1045,828],[1052,816],[1062,820],[1075,808],[1092,803],[1105,793],[1118,792],[1130,807],[1139,804],[1147,811],[1154,805],
    [1162,811],[1168,813],[1176,808],[1183,810],[1191,813],[1198,814],[1206,818],[1212,816],[1220,805]];

// dividers of the date axis, month ends are the thicker grid lines
const dividers = [41.5,63.5,85.5,107.5,129.5,152,174.5,196.5,218.5,240.5,262.5,284.5,306.5,328,350.5,373.5,395.5,417.5,439.5,461,
    483.5,505.5,527.5,549.5,571.5,593.5,624,638.5,660.5,682.5,704.5,726.5,748.5,771.5,786,815.5,837.5,859.5,881.5,903.5,925.5,
    940.5,969.5,991.5,1013.5,1035.5,1058.5,1080.5,1109,1124.5,1146.5,1168.5,1190.5,1212.5];
const monthEnds = [152,328,461,624,786,940.5,1109];
const months = [['febrero 2006',85],['marzo 2006',239],['abril 2006',394],['mayo 2006',541],['junio 2006',703],['julio 2006',856],
    ['agosto 2006',1023],['septiembre 2006',1167]];
const days = [['03',30],['08',52],['13',74],['16',96],['21',118],['24',139],['01',162],['06',184],['09',206],['14',228],['17',250],
    ['21',272],['24',294],['29',316],['03',339],['06',361],['11',383],['18',405],['21',427],['26',449],['02',471],['05',493],
    ['10',515],['15',538],['18',560],['26',606],['05',649],['08',671],['13',693],['16',715],['21',737],['26',759],['03',800],
    ['07',824],['12',848],['17',870],['20',892],['25',914],['01',953],['07',979],['10',1001],['15',1023],['18',1045],['23',1069],
    ['28',1094],['05',1134],['08',1156],['13',1178],['18',1200]];

function line(x1, y1, x2, y2, color, width) {
    return `<line x1="${x1}" y1="${y1}" x2="${x2}" y2="${y2}" stroke="${color}" stroke-width="${width || 1}"/>`;
}

function polyline(points, color, width) {
    const pts = points.map(p => p.join(',')).join(' ');
    return `<polyline points="${pts}" fill="none" stroke="${color}" stroke-width="${width || 1}" stroke-linejoin="round"/>`;
}

function text(x, y, str, anchor) {
    return `<text x="${x}" y="${y}" text-anchor="${anchor || 'start'}">${str}</text>`;
}

function drawGrid() {
    let out = '';
    dividers.forEach(x => {
        const month = monthEnds.includes(x);
        out += line(x, TOP, x, 933, month ? '#bababa' : '#bebebe', month ? 2 : 1);
    });
    for (let price = 0; price < 10; price++) {
        const y = Math.round(164 + price * 60.75) + 0.5;
        out += line(LEFT, y, AXIS_X, y, '#bebebe');
    }
    [765, 789, 813, 862, 886, 911].forEach(y => {
        out += line(LEFT, y + 0.5, AXIS_X, y + 0.5, '#bebebe');
    });
    return out;
}

function drawPsar() {
    let out = '';
    psarSections.forEach(s => {
        s.dots.forEach(d => {
            out += `<circle cx="${s.bx + d[0] / 3}" cy="${s.by + d[1] / 3}" r="2" fill="#9a9a9a"/>`;
        });
    });
    return out;
}

function drawCandles() {
    let out = '';
    candleSections.forEach(s => {
        s.rows.forEach(r => {
            const x = Math.floor(s.bx + r[0] / 3) + 0.5;
            const hi = s.by + r[1] / 3, lo = s.by + r[2] / 3;
            const top = Math.round(s.by + r[3] / 3) + 0.5, bot = Math.round(s.by + r[4] / 3) + 0.5;
            const kind = r[5];
            if (kind === 'm') {
                out += line(x - 2.5, top, x + 3, top, '#ff0000');
                return;
            }
            out += line(x, hi, x, lo, '#000');
            if (kind === 'd') {
                out += line(x - 3, top, x + 3, top, '#000', 2);
            } else if (kind !== 'n') {
                const fill = kind === 'g' ? '#90ee90' : '#ff0000';
                out += `<rect x="${x - 2}" y="${top}" width="4" height="${bot - top}" fill="${fill}" stroke="#000"/>`;
            }
        });
    });
    return out;
}

function drawAxis() {
    let out = line(AXIS_X, TOP, AXIS_X, 963, '#222');
    for (let y = 115.5; y < 741; y += 12.15) {
        out += line(AXIS_X, y, AXIS_X + 3, y, '#222');
    }
    for (let price = 123; price >= 114; price--) {
        const y = Math.round(164 + (123 - price) * 60.75) + 0.5;
        out += line(AXIS_X, y, AXIS_X + 6, y, '#222');
        out += text(1236, y + 3, price + ',00');
    }
    for (let y = 747; y < 932; y += 3.04) {
        out += line(AXIS_X, y, AXIS_X + 3, y, '#222');
    }
    [[74,765],[66,789],[58,813],[50,838],[42,862],[34,886],[26,911]].forEach(m => {
        out += line(AXIS_X, m[1] + 0.5, AXIS_X + 6, m[1] + 0.5, '#222');
        out += text(1236, m[1] + 4, m[0] + '%');
    });
    return out;
}

function drawDates() {
    let out = `<rect x="${LEFT}" y="934" width="${WIDTH}" height="29" fill="#d2d2d2"/>`;
    dividers.forEach(x => {
        out += line(x, 933, x, 948, '#111');
    });
    monthEnds.forEach(x => {
        out += line(x, 948, x, 963, '#111');
    });
    out += line(AXIS_X, 933, AXIS_X, 963, '#111');
    out += line(LEFT, 948.5, AXIS_X, 948.5, '#111');
    days.forEach(d => {
        out += text(d[1], 945, d[0], 'middle');
    });
    months.forEach(m => {
        out += text(m[1], 960, m[0], 'middle');
    });
    return out;
}

function drawChart() {
    let svg = `<svg width="${WIDTH}" height="${HEIGHT}" viewBox="${LEFT} ${TOP} ${WIDTH} ${HEIGHT}">`;
    svg += drawGrid();
    svg += drawPsar();
    svg += polyline(bandUpper, '#72aaaa', 1.2);
    svg += polyline(bandLower, '#72aaaa', 1.2);
    svg += drawCandles();
    svg += polyline(grayLine, '#5c5c5c');
    svg += polyline(magentaLine, '#ff5cff');
    svg += polyline(blueLine, '#3c4ee6', 1.2);
    svg += line(118, 281, 1227, 281, '#ffff00', 2);
    svg += line(180, 397, 1230, 397, '#ffff00', 2);
    svg += line(193, 436, 1241, 436, '#ffff00', 2);
    svg += `<line x1="26" y1="452" x2="1222" y2="452" stroke="#fff" stroke-width="2" stroke-dasharray="3 2"/>`;
    // RSI pane
    svg += line(LEFT, 741.5, 1275, 741.5, '#000');
    svg += line(LEFT, 746.5, AXIS_X, 746.5, '#ff0000', 1.5);
    svg += line(LEFT, 837.5, AXIS_X, 837.5, '#3c66c8');
    svg += line(LEFT, 929, AXIS_X, 929, '#00ff00', 1.5);
    svg += polyline(rsiLine, '#a2607c', 1.2);
    svg += line(LEFT, 933.5, 1275, 933.5, '#222');
    svg += '<path d="M1215 746.5 L1223 753.5 M1223 746.5 L1215 753.5" stroke="#000" stroke-width="1.5"/>';
    svg += drawAxis();
    svg += drawDates();
    svg += '</svg>';
    document.getElementById('chart').insertAdjacentHTML('afterbegin', svg);
}

drawChart();
```
